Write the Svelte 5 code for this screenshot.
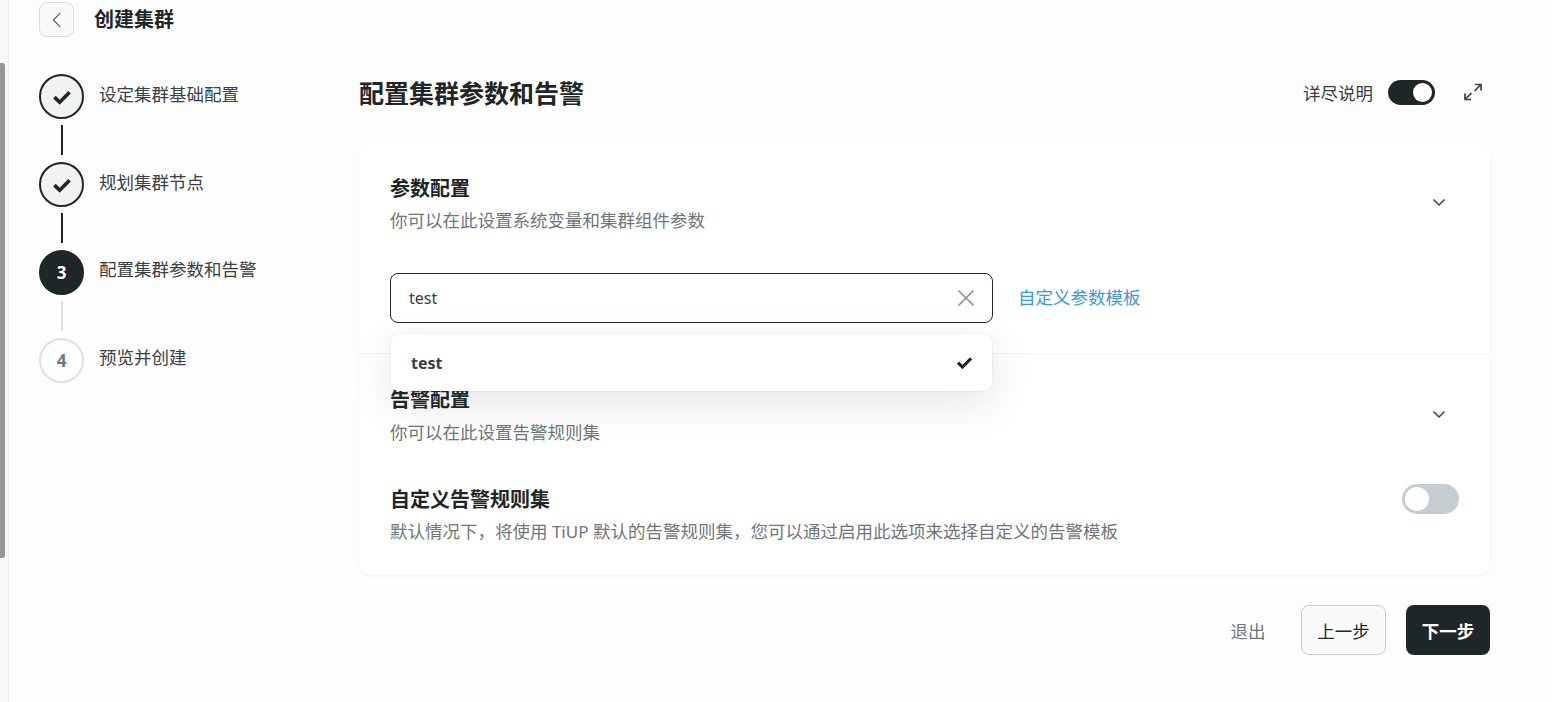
<script>
  const steps = [
    { label: "设定集群基础配置", state: "done" },
    { label: "规划集群节点", state: "done" },
    { label: "配置集群参数和告警", state: "active" },
    { label: "预览并创建", state: "todo" },
  ];
</script>

{#snippet check(size)}
  <svg width={size} height={size} viewBox="0 0 16 16" fill="none">
    <path d="M2.500 8.100 6.300 11.800 13.500 4.600" stroke="currentColor" stroke-width="2.600" />
  </svg>
{/snippet}

{#snippet chevron()}
  <svg class="chevron" width="16" height="16" viewBox="0 0 16 16" fill="none">
    <path d="M2.500 5.500 8 11l5.500-5.500" stroke="currentColor" stroke-width="1.500" />
  </svg>
{/snippet}

<div class="page">
  <div class="rail"><div class="thumb"></div></div>

  <div class="content">
    <header class="topbar">
      <button class="back" aria-label="返回">
        <svg width="16" height="16" viewBox="0 0 16 16" fill="none">
          <path d="M11.200 1.200 4.400 8l6.800 6.800" stroke="currentColor" stroke-width="1.200" />
        </svg>
      </button>
      <h1>创建集群</h1>
    </header>

    <div class="body">
      <ol class="stepper">
        {#each steps as step, i}
          <li class="step {step.state}">
            <div class="marker">
              <span class="dot">
                {#if step.state === "done"}
                  {@render check(22)}
                {:else}
                  {i + 1}
                {/if}
              </span>
              {#if i < steps.length - 1}
                <span class="line"></span>
              {/if}
            </div>
            <span class="label">{step.label}</span>
          </li>
        {/each}
      </ol>

      <main class="main">
        <div class="main-head">
          <h2>配置集群参数和告警</h2>
          <div class="head-tools">
            <span class="tool-label">详尽说明</span>
            <span class="switch on"><i></i></span>
            <svg class="expand" width="20" height="20" viewBox="0 0 20 20" fill="none">
              <path d="M12 2.500h6v6M18 2.500l-6.500 6.500M8 17.500H2v-6M2 17.500 8.500 11" stroke="currentColor" stroke-width="1.700" />
            </svg>
          </div>
        </div>

        <section class="card">
          <div class="panel first">
            <div class="panel-head">
              <div>
                <h3>参数配置</h3>
                <p>你可以在此设置系统变量和集群组件参数</p>
              </div>
              {@render chevron()}
            </div>
            <div class="field-row">
              <div class="select">
                <span class="latin">test</span>
                <svg class="clear" width="20" height="20" viewBox="0 0 20 20" fill="none">
                  <path d="M2.500 2.500l15 15M17.500 2.500l-15 15" stroke="currentColor" stroke-width="1.600" />
                </svg>
                <div class="dropdown">
                  <strong class="latin">test</strong>
                  {@render check(19)}
                </div>
              </div>
              <a href="#top">自定义参数模板</a>
            </div>
          </div>

          <div class="panel second">
            <div class="panel-head">
              <div>
                <h3>告警配置</h3>
                <p class="alert-desc">你可以在此设置告警规则集</p>
              </div>
              {@render chevron()}
            </div>
            <div class="option">
              <div>
                <h3>自定义告警规则集</h3>
                <p>默认情况下，将使用<span class="product">{" TiUP "}</span>默认的告警规则集，您可以通过启用此选项来选择自定义的告警模板</p>
              </div>
              <span class="switch big"><i></i></span>
            </div>
          </div>
        </section>

        <footer class="actions">
          <button class="quit">退出</button>
          <button class="prev">上一步</button>
          <button class="next">下一步</button>
        </footer>
      </main>
    </div>
  </div>
</div>

<style>
  :global(body) {
    background: #fdfdfe;
    overflow: hidden;
  }
  .page {
    display: flex;
    height: 702px;
    font-family: "Noto Sans", "Noto Sans CJK SC", sans-serif;
    color: #1f2628;
  }
  .rail {
    width: 8px;
    flex: none;
    background: #f7f8fa;
    border-right: 1px solid #eef0f3;
  }
  .thumb {
    width: 5px;
    height: 495px;
    margin-top: 63px;
    background: #949699;
    border-radius: 0 3px 3px 0;
  }
  .content {
    flex: 1;
    padding: 2px 62px 0 30px;
    min-width: 0;
  }
  .topbar {
    display: flex;
    align-items: center;
    gap: 20px;
    height: 35px;
  }
  .back {
    display: flex;
    align-items: center;
    justify-content: center;
    width: 35px;
    height: 35px;
    padding: 0;
    border: 1px solid #d5dcde;
    border-radius: 8px;
    background: #f9fafb;
    color: #555b5e;
  }
  h1 {
    margin: 0;
    font-size: 20px;
    font-weight: 700;
    line-height: 1.4;
  }
  .body {
    display: flex;
    margin-top: 36px;
  }
  .stepper {
    width: 320px;
    flex: none;
    margin: 1px 0 0;
    padding: 0;
    list-style: none;
  }
  .step {
    display: flex;
    gap: 15px;
    height: 88px;
  }
  .marker {
    display: flex;
    flex-direction: column;
    align-items: center;
    gap: 6px;
    width: 45px;
    flex: none;
  }
  .dot {
    display: flex;
    align-items: center;
    justify-content: center;
    box-sizing: border-box;
    width: 45px;
    height: 45px;
    border-radius: 50%;
    border: 2px solid #1f2628;
    font-size: 17px;
    font-weight: 700;
  }
  .done .dot {
    background: #f0f2f3;
  }
  .active .dot {
    background: #1f2628;
    color: #fff;
  }
  .todo .dot {
    border-color: #dce2e4;
    color: #6f7679;
  }
  .line {
    width: 2px;
    height: 30px;
    background: #1f2628;
  }
  .active .line {
    background: #dce2e4;
  }
  .label {
    font-size: 17.5px;
    line-height: 24px;
    margin-top: 7px;
    color: #3a4043;
  }
  .done .label {
    margin-top: 8px;
  }
  .main {
    flex: 1;
    min-width: 0;
  }
  .main-head {
    display: flex;
    align-items: center;
    justify-content: space-between;
    height: 40px;
    margin-top: 1px;
  }
  h2 {
    margin: 0 0 2px;
    font-size: 25px;
    font-weight: 700;
    line-height: 38px;
  }
  .head-tools {
    display: flex;
    align-items: center;
    margin: 0 7px 4px 0;
    color: #3a4043;
  }
  .tool-label {
    font-size: 17.5px;
    margin-right: 15px;
  }
  .expand {
    margin-left: 28px;
    color: #3a4043;
  }
  .switch {
    display: block;
    box-sizing: border-box;
    width: 47px;
    height: 25px;
    padding: 3px;
    border-radius: 13px;
    background: #1f2628;
  }
  .switch i {
    display: block;
    width: 19px;
    height: 19px;
    border-radius: 50%;
    background: #fff;
  }
  .switch.on i {
    margin-left: 22px;
  }
  .switch.big {
    width: 57px;
    height: 30px;
    padding: 3px;
    border-radius: 15px;
    background: #c5cdd0;
  }
  .switch.big i {
    width: 24px;
    height: 24px;
  }
  .card {
    margin-top: 28px;
    background: #fff;
    border-radius: 12px;
    box-shadow: 0 1px 3px rgba(30, 40, 60, 0.06);
  }
  .panel {
    padding: 0 31px;
  }
  .first {
    height: 212px;
    border-bottom: 1px solid #f0f2f3;
    box-sizing: border-box;
    padding-top: 32px;
  }
  .second {
    padding-top: 31px;
    height: 221px;
    box-sizing: border-box;
  }
  .panel-head,
  .option {
    display: flex;
    justify-content: space-between;
    align-items: center;
  }
  .chevron {
    margin: 0 12px 2px 0;
    color: #3a4043;
  }
  h3 {
    margin: 0;
    font-size: 20px;
    font-weight: 700;
    line-height: 30px;
  }
  p {
    margin: 4px 0 0;
    font-size: 17.5px;
    line-height: 24px;
    color: #6f7679;
  }
  .alert-desc {
    margin-top: 5px;
  }
  .latin {
    font-size: 16px;
  }
  .product {
    font-size: 17px;
  }
  .field-row {
    display: flex;
    align-items: center;
    gap: 25px;
    margin-top: 41px;
  }
  .select {
    position: relative;
    display: flex;
    align-items: center;
    justify-content: space-between;
    box-sizing: border-box;
    width: 603px;
    height: 50px;
    padding: 0 16px 0 18px;
    border: 1px solid #1f2628;
    border-radius: 8px;
    color: #3a4043;
  }
  .clear {
    color: #8c9193;
  }
  .dropdown {
    position: absolute;
    left: 0;
    right: 0;
    top: 60px;
    display: flex;
    align-items: center;
    justify-content: space-between;
    height: 57px;
    padding: 0 18px 0 20px;
    background: #fff;
    border-radius: 8px;
    box-shadow: 0 0 2px rgba(30, 40, 60, 0.12), 0 12px 40px rgba(30, 40, 60, 0.12);
    color: #1f2628;
    z-index: 2;
  }
  .dropdown strong {
    margin-top: 1px;
    color: #3a4043;
  }
  a {
    margin-bottom: 3px;
    font-size: 17.5px;
    color: #3b9ad9;
    text-decoration: none;
  }
  .option {
    margin-top: 41px;
  }
  .option .switch {
    align-self: flex-start;
    margin-top: -1px;
  }
  .actions {
    display: flex;
    align-items: center;
    justify-content: flex-end;
    margin-top: 30px;
  }
  .actions button {
    height: 50px;
    font: inherit;
    font-size: 17.5px;
    border-radius: 8px;
    padding: 0;
  }
  .quit {
    width: 72px;
    border: none;
    background: none;
    color: #6f7679;
    margin-right: 17px;
  }
  .prev {
    width: 85px;
    border: 1px solid #c5cdd0;
    background: #f9fafb;
    color: #1f2628;
    margin-right: 20px;
  }
  .next {
    width: 84px;
    border: none;
    background: #1f2628;
    color: #fff;
    font-weight: 700 !important;
  }
</style>
